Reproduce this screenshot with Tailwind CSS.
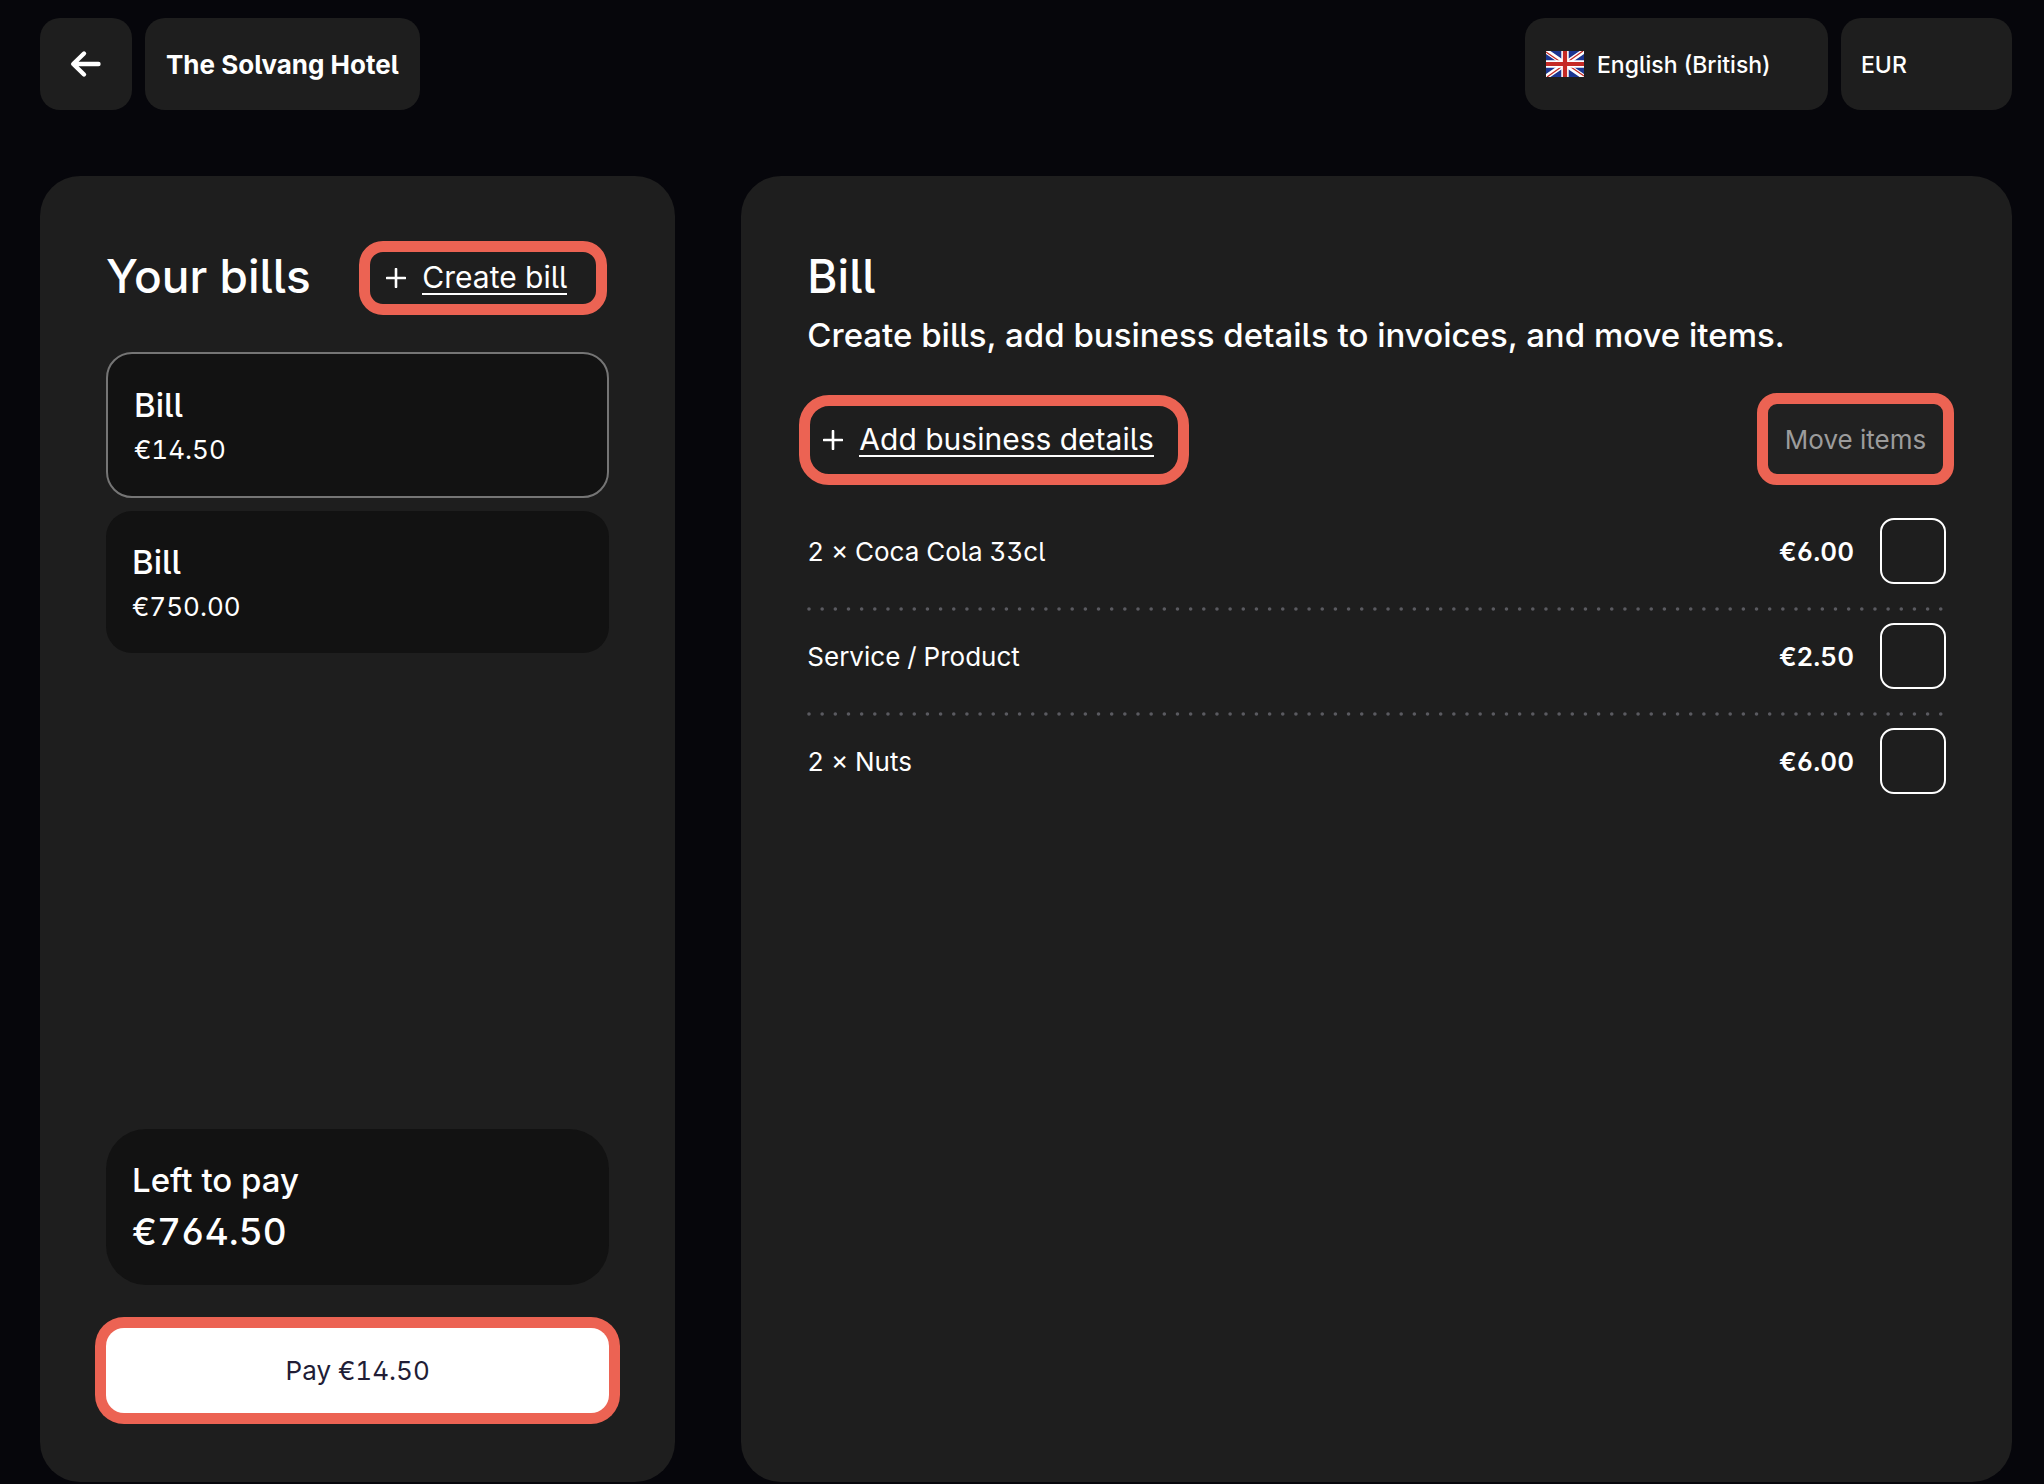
<!DOCTYPE html>
<html lang="en">
<head>
  <meta charset="UTF-8">
  <meta name="viewport" content="width=device-width, initial-scale=1.0">
  <title>The Solvang Hotel - Your bills</title>
  <script src="https://cdn.jsdelivr.net/npm/@tailwindcss/browser@4"></script>
</head>
<body class="flex min-h-screen flex-col gap-[66px] bg-[#06060b] pt-[18px] pr-8 pb-0.5 pl-10 font-['Inter',sans-serif] text-[26px] text-white [font-feature-settings:'cv02','cv03','cv04','cv05','cv09']">

  <!-- Top bar -->
  <header class="flex h-[92px] items-stretch gap-[13px]">
    <button type="button" aria-label="Back" class="flex w-[92px] items-center justify-center rounded-[20px] bg-[#1e1e1e]">
      <svg class="h-7 w-8" viewBox="0 0 32 28" fill="none" stroke="currentColor" stroke-width="4.4" stroke-linecap="round" stroke-linejoin="round">
        <path d="M28.500 14H3.500M14 3.500L3.200 14L14 24.500" />
      </svg>
    </button>
    <div class="flex items-center rounded-[20px] bg-[#1e1e1e] px-[21px] font-bold">The Solvang Hotel</div>

    <label class="ml-auto flex w-[303px] items-center gap-[13px] rounded-[20px] bg-[#1e1e1e] px-[21px]">
      <svg class="h-[26px] w-[38px] shrink-0" viewBox="0 0 38 26" aria-hidden="true">
        <clipPath id="flag"><rect width="38" height="26" /></clipPath>
        <g clip-path="url(#flag)">
          <rect width="38" height="26" fill="#1b3590" />
          <path d="M0 0L38 26M38 0L0 26" stroke="#fff" stroke-width="5" />
          <path d="M0 1L17.500 13M38 25L20.500 13M37 0L20 12M1 26L18 14" stroke="#c52a25" stroke-width="1.300" />
          <path d="M19 0V26M0 13H38" stroke="#fff" stroke-width="7.400" />
          <path d="M19 0V26M0 13H38" stroke="#c52a25" stroke-width="4.200" />
        </g>
      </svg>
      <select aria-label="Language" class="min-w-0 flex-1 appearance-none bg-transparent pt-0.5 text-[23px] font-medium">
        <option>English (British)</option>
      </select>
    </label>
    <label class="flex w-[171px] items-center rounded-[20px] bg-[#1e1e1e] px-5">
      <select aria-label="Currency" class="w-full appearance-none bg-transparent pt-0.5 text-[23px] font-medium">
        <option>EUR</option>
      </select>
    </label>
  </header>

  <main class="grid flex-1 grid-cols-[1fr_2fr] gap-[66px]">

    <!-- Bills -->
    <section class="flex min-w-0 flex-col rounded-[40px] bg-[#1e1e1e] px-[66px] pt-[65px] pb-[69px]">
      <div class="flex items-start justify-between pr-0.5">
        <h1 class="text-[46px] leading-[70px] font-medium">Your bills</h1>
        <button type="button" class="flex h-[74px] w-[248px] items-center gap-4 rounded-[24px] border-[11px] border-[#ec6353] pl-4 text-[30px]">
          <svg class="size-5" viewBox="0 0 20 20" fill="none" stroke="currentColor" stroke-width="2.600" stroke-linecap="round"><path d="M10 1V19M1 10H19" /></svg>
          <span class="border-b-2 leading-8">Create bill</span>
        </button>
      </div>

      <div class="mt-[37px] flex flex-col gap-[13px]">
        <button type="button" class="rounded-[26px] border-2 border-[#757575] bg-[#121212] px-[26px] pt-7 pb-6 text-left">
          <span class="block text-[33px] leading-[46px] font-medium">Bill</span>
          <span class="block leading-[44px] tabular-nums">€14.50</span>
        </button>
        <button type="button" class="rounded-[26px] bg-[#121212] px-[26px] pt-7 pb-6 text-left">
          <span class="block text-[33px] leading-[46px] font-medium">Bill</span>
          <span class="block leading-[44px] tabular-nums">€750.00</span>
        </button>
      </div>

      <div class="mt-auto rounded-[40px] bg-[#121212] p-[26px]">
        <p class="text-[33px] leading-[50px] font-medium">Left to pay</p>
        <p class="text-[37px] leading-[54px] font-medium tabular-nums">€764.50</p>
      </div>
      <button type="button" class="mt-[43px] h-[85px] rounded-[18px] bg-white text-[#211d36] tabular-nums ring-[11px] ring-[#ec6353]">Pay €14.50</button>
    </section>

    <!-- Selected bill -->
    <section class="min-w-0 rounded-[40px] bg-[#1e1e1e] px-[66px] pt-16 pb-[69px]">
      <h2 class="text-[46px] leading-[72px] font-medium">Bill</h2>
      <p class="text-[33px] leading-[46px] font-medium">Create bills, add business details to invoices, and move items.</p>

      <div class="-mx-2 mt-[35px] flex items-end justify-between">
        <button type="button" class="flex h-[90px] w-[390px] items-center gap-4 rounded-[30px] border-[11px] border-[#ec6353] pl-[13px] text-[30px]">
          <svg class="size-5" viewBox="0 0 20 20" fill="none" stroke="currentColor" stroke-width="2.600" stroke-linecap="round"><path d="M10 1V19M1 10H19" /></svg>
          <span class="border-b-2 leading-8">Add business details</span>
        </button>
        <button type="button" disabled class="h-[92px] w-[197px] rounded-[20px] border-[11px] border-[#ec6353] bg-[#212121] text-[#9c9c9c]">Move items</button>
      </div>

      <ul class="mt-[21px] tabular-nums">
        <li>
          <label class="flex items-center pt-3 pb-[23px]">
            <span>2 × Coca Cola 33cl</span>
            <span class="ml-auto font-semibold">€6.00</span>
            <input type="checkbox" class="ml-[26px] size-[66px] appearance-none rounded-[14px] border-2 border-white checked:bg-white">
          </label>
          <svg class="block h-1 w-full" aria-hidden="true"><line x1="2" y1="2" x2="99.600%" y2="2" stroke="#5a5a60" stroke-width="3.600" stroke-linecap="round" stroke-dasharray="0 13.160" /></svg>
        </li>
        <li>
          <label class="flex items-center pt-3 pb-[23px]">
            <span>Service / Product</span>
            <span class="ml-auto font-semibold">€2.50</span>
            <input type="checkbox" class="ml-[26px] size-[66px] appearance-none rounded-[14px] border-2 border-white checked:bg-white">
          </label>
          <svg class="block h-1 w-full" aria-hidden="true"><line x1="2" y1="2" x2="99.600%" y2="2" stroke="#5a5a60" stroke-width="3.600" stroke-linecap="round" stroke-dasharray="0 13.160" /></svg>
        </li>
        <li>
          <label class="flex items-center pt-3 pb-[23px]">
            <span>2 × Nuts</span>
            <span class="ml-auto font-semibold">€6.00</span>
            <input type="checkbox" class="ml-[26px] size-[66px] appearance-none rounded-[14px] border-2 border-white checked:bg-white">
          </label>
        </li>
      </ul>
    </section>
  </main>
</body>
</html>
